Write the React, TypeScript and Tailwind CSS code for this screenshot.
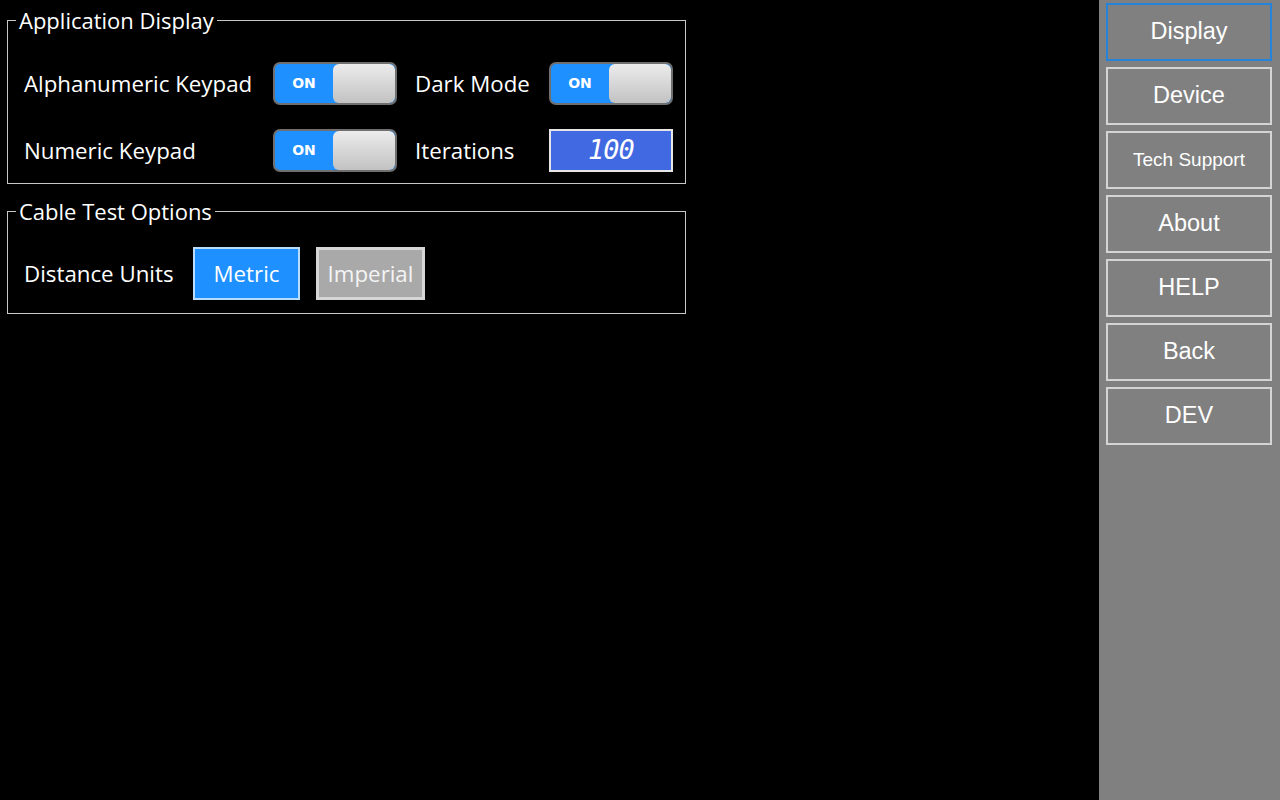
import type { ReactNode } from 'react';

const uiFont = "font-['Open_Sans','Noto_Sans',sans-serif]";
const navFont = "font-['Liberation_Sans',Arial,sans-serif]";

const navItems = ['Display', 'Device', 'Tech Support', 'About', 'HELP', 'Back', 'DEV'];

function Group({ title, children, className = '' }: { title: string; children: ReactNode; className?: string }) {
  return (
    <fieldset className={`border border-[#c8c8c8] ${className}`}>
      <legend className="ml-[8px] px-[3px] text-[22px] leading-[24px] text-white">{title}</legend>
      {children}
    </fieldset>
  );
}

function Toggle() {
  return (
    <div className="flex h-[43px] w-[124px] overflow-hidden rounded-[7px] border-2 border-[#6f6f6f] bg-[#1e90ff]">
      <div className="flex w-[58px] items-center justify-center font-['DejaVu_Sans',sans-serif] text-[14px] font-bold text-white">
        ON
      </div>
      <div className="flex-1 rounded-[6px] bg-gradient-to-b from-[#ececec] to-[#c2c2c2]" />
    </div>
  );
}

function Label({ children, w }: { children: ReactNode; w: string }) {
  return <div className={`${w} text-[22.3px] text-white`}>{children}</div>;
}

export default function App() {
  return (
    <div className={`flex h-[800px] w-[1280px] bg-black ${uiFont}`}>
      {/* Main */}
      <main className="flex-1 px-[7px] pt-[8px]">
        <Group title="Application Display" className="w-[679px]">
          <div className="flex flex-col gap-[24px] pb-[11px] pl-[16px] pt-[30px]">
            <div className="flex items-center">
              <Label w="w-[249px]">Alphanumeric Keypad</Label>
              <Toggle />
              <Label w="ml-[18px] w-[134px]">Dark Mode</Label>
              <Toggle />
            </div>
            <div className="flex items-center">
              <Label w="w-[249px]">Numeric Keypad</Label>
              <Toggle />
              <Label w="ml-[18px] w-[134px]">Iterations</Label>
              <div className="flex h-[43px] w-[124px] items-center justify-center border-2 border-[#e6e6e6] bg-[#4169e1]">
                <span className="font-['DejaVu_Sans_Mono',monospace] text-[27px] font-light italic tracking-[-1px] text-white">
                  100
                </span>
              </div>
            </div>
          </div>
        </Group>

        <Group title="Cable Test Options" className="mt-[15px] w-[679px]">
          <div className="flex items-center pb-[13px] pl-[16px] pt-[24px]">
            <Label w="w-[169px]">Distance Units</Label>
            <button className="h-[53px] w-[107px] border-2 border-[#b9dcfa] bg-[#1e90ff] text-[22.3px] text-white">
              Metric
            </button>
            <button className="ml-[16px] h-[53px] w-[109px] border-[3px] border-[#d6d6d6] bg-[#a9a9a9] text-[22.3px] text-[#f4f4f4]">
              Imperial
            </button>
          </div>
        </Group>
      </main>

      {/* Sidebar */}
      <aside className={`flex w-[181px] flex-col gap-[6px] bg-[#808080] pl-[7px] pr-[8px] pt-[3px] ${navFont}`}>
        {navItems.map((item) => (
          <button
            key={item}
            className={`h-[58px] w-full border-2 bg-[#808080] text-white ${
              item === 'Display' ? 'border-[#2484dc]' : 'border-[#d4d4d4]'
            } ${item === 'Tech Support' ? 'text-[19px]' : 'text-[23.5px]'}`}
          >
            {item}
          </button>
        ))}
      </aside>
    </div>
  );
}
